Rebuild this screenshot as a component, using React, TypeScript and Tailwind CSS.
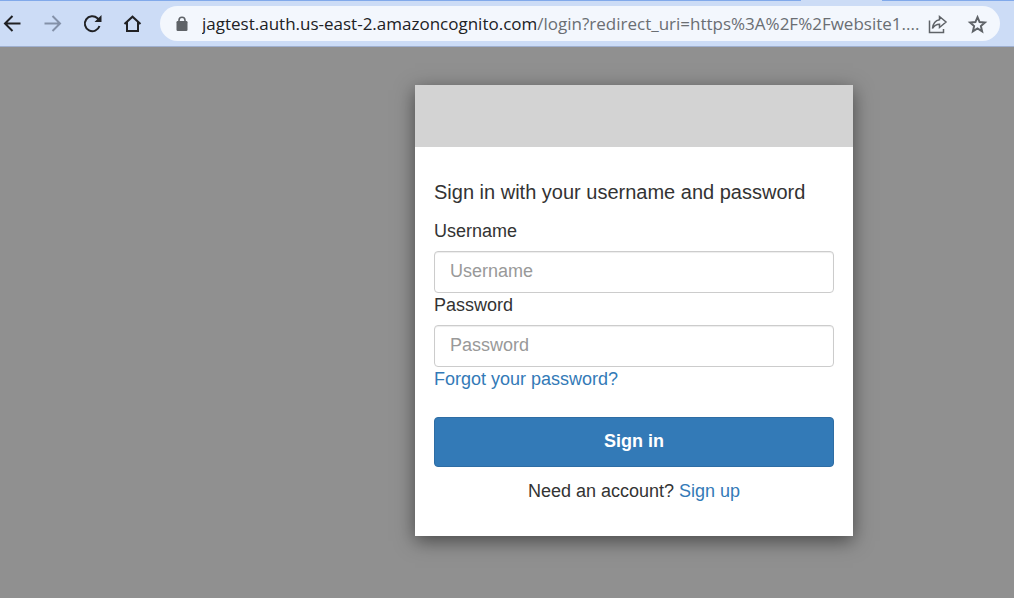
import React from "react";

type IconButtonProps = {
  label: string;
  className?: string;
  children: React.ReactNode;
};

function IconButton({ label, className = "text-[#202124]", children }: IconButtonProps) {
  return (
    <button type="button" aria-label={label} className={`flex size-6 shrink-0 items-center justify-center ${className}`}>
      <svg viewBox="0 0 24 24" className="size-6" fill="none" stroke="currentColor" strokeWidth="2" aria-hidden="true">
        {children}
      </svg>
    </button>
  );
}

function Toolbar() {
  return (
    <header className="border-b border-[#9fb0d0] bg-[#ccdcf6] font-['Open_Sans','Noto_Sans',sans-serif]">
      <div className="flex h-px justify-between" aria-hidden="true">
        <span className="w-[79%] bg-[#81a9ea]" />
        <span className="w-[13%] bg-[#81a9ea]" />
      </div>
      <div className="flex items-center gap-4 py-[5px] pr-[14px]">
        <IconButton label="Back">
          <path d="M20.5 11.500H5.5M12.5 4 5 11.500l7.5 7.5" />
        </IconButton>
        <IconButton label="Forward" className="text-[#8491a8]">
          <path d="M4.5 11.500h15M12.5 4 20 11.500l-7.500 7.500" />
        </IconButton>
        <IconButton label="Reload">
          <path d="M19.500 14A7.500 7.500 0 1 1 17.500 6.200L19 7.700" />
          <path d="M21.500 3V10H14.500Z" fill="currentColor" stroke="none" />
        </IconButton>
        <IconButton label="Home">
          <path d="M4.500 12 12.500 4.700 20.500 12M7 10V19H18V10" />
        </IconButton>
        <div className="flex h-[35px] min-w-0 flex-1 items-center rounded-full bg-[#f3f7fd] pr-[11px] pl-4">
          <svg viewBox="0 0 12 16" className="mr-[14px] h-4 w-3 shrink-0" aria-hidden="true">
            <rect x="0.500" y="5" width="11" height="10" rx="1.200" fill="#5f6368" />
            <path d="M3 6V4.200a3 3 0 0 1 6 0V6" fill="none" stroke="#5f6368" strokeWidth="1.600" />
          </svg>
          <div
            role="textbox"
            aria-label="Address"
            tabIndex={0}
            className="min-w-0 flex-1 truncate text-[17px] leading-6 text-[#6a6e73]"
          >
            <span className="text-[#202124]">jagtest.auth.us-east-2.amazoncognito.com</span>
            /login?redirect_uri=https%3A%2F%2Fwebsite1....
          </div>
          <div className="flex gap-4">
            <IconButton label="Share" className="text-[#5f6368]">
              <path strokeWidth="1.500" d="M4.500 8.500V20.500H18.500V17" />
              <path
                strokeWidth="1.500"
                strokeLinejoin="miter"
                d="M14.500 4.500 21 10l-6.500 5.500V12.300C11.500 12.300 9.300 13.300 7.500 16.500 8 11.500 10.500 8.300 14.500 7.700Z"
              />
            </IconButton>
            <IconButton label="Bookmark this page" className="text-[#5f6368]">
              <path
                strokeWidth="2"
                d="M12.500 5.200 14.600 10.100 19.900 10.600 15.900 14.100 17.100 19.300 12.500 16.500 7.900 19.300 9.100 14.100 5.100 10.600 10.400 10.100Z"
              />
            </IconButton>
          </div>
        </div>
      </div>
    </header>
  );
}

type FieldProps = { id: string; label: string; type: string };

function Field({ id, label, type }: FieldProps) {
  return (
    <div>
      <label htmlFor={id} className="mb-2 block">
        {label}
      </label>
      <input
        id={id}
        name={id}
        type={type}
        placeholder={label}
        className="block h-[42px] w-full rounded border border-[#ccc] bg-white px-[15px] pb-0.5 shadow-[inset_0_1px_1px_rgba(0,0,0,0.075)] placeholder:text-[#999]"
      />
    </div>
  );
}

export default function App() {
  return (
    <div className="flex min-h-screen flex-col bg-[#909090]">
      <Toolbar />
      <main className="flex flex-1 items-start justify-center pt-[38px] pb-8 pl-[254px] font-['Liberation_Sans',Arial,sans-serif] text-[18px] leading-6 text-[#333]">
        <section className="w-full max-w-[438px] bg-white shadow-[0_5px_18px_rgba(0,0,0,0.5)]">
          <div className="h-[62px] bg-[#d3d3d3]" />
          <form className="px-[19px] pt-[31px] pb-[33px]" onSubmit={(event) => event.preventDefault()}>
            <h1 className="mb-[13px] text-[20px] leading-7">Sign in with your username and password</h1>
            <Field id="username" label="Username" type="text" />
            <Field id="password" label="Password" type="password" />
            <a href="#forgot" className="text-[#337ab7]">
              Forgot your password?
            </a>
            <button
              type="submit"
              className="mt-[26px] mb-3 block h-[50px] w-full rounded border border-[#2e6da4] bg-[#337ab7] pb-0.5 font-bold text-white"
            >
              Sign in
            </button>
            <p className="text-center">
              Need an account?{" "}
              <a href="#signup" className="text-[#337ab7]">
                Sign up
              </a>
            </p>
          </form>
        </section>
      </main>
    </div>
  );
}
